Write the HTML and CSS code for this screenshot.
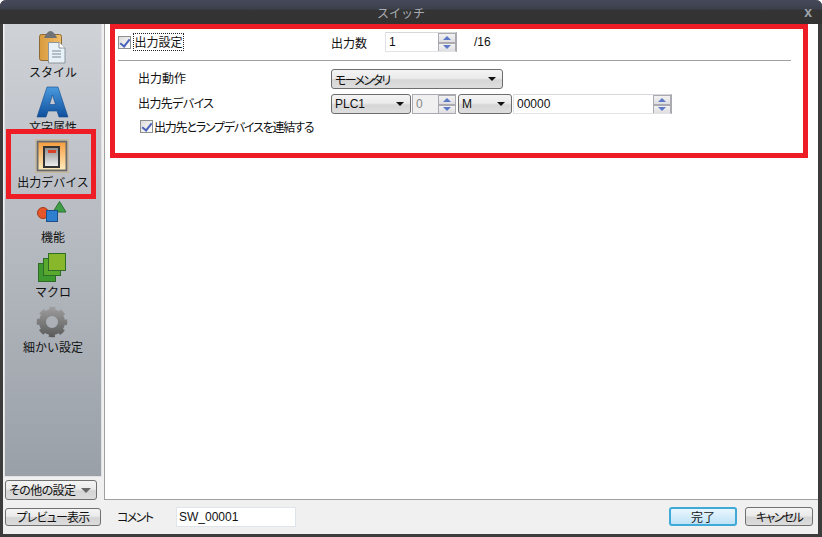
FILE: index.html
```html
<!DOCTYPE html>
<html lang="ja">
<head>
<meta charset="utf-8">
<title>スイッチ</title>
<link rel="stylesheet" href="styles.css">
</head>
<body>
<div class="window">
  <header class="titlebar">
    <span class="title">スイッチ</span>
    <span class="close">x</span>
  </header>
  <div class="content">
    <aside class="side">
      <nav class="nav">
        <div class="nav-item">
          <svg class="icon" width="36" height="36" viewBox="0 0 36 36">
            <defs><linearGradient id="cb" x1="0" y1="0" x2="1" y2="0"><stop offset="0" stop-color="#d99a3e"/><stop offset="1" stop-color="#f0bd68"/></linearGradient></defs>
            <rect x="4.500" y="7.500" width="22" height="26" rx="2" fill="url(#cb)" stroke="#8c6a35"/>
            <path d="M10 9 L12 6 Q15.500 2 19 6 L21 9 L22 11 H9 Z" fill="#6f7277"/>
            <path d="M13.500 15.500 H24 L30 21 V36 H13.500 Z" fill="#e8f1f8" stroke="#8d969e"/>
            <path d="M24 15.500 V21 H30" fill="#fff" stroke="#8d969e"/>
            <path d="M17 24 H26 M17 27 H26 M17 30 H26" stroke="#7d8a96" stroke-width="1.2"/>
          </svg>
          <span class="nav-label">スタイル</span>
        </div>
        <div class="nav-item">
          <svg class="icon" width="36" height="36" viewBox="0 0 36 36">
            <defs><linearGradient id="ag" x1="0" y1="0" x2="0" y2="1"><stop offset="0" stop-color="#4a9adf"/><stop offset="1" stop-color="#0f4f9c"/></linearGradient></defs>
            <path fill-rule="evenodd" d="M12 5 H23 L33 35 H24 L22 29 H13 L11 35 H2 Z M17.500 13 L14.500 22.500 H20.500 Z" fill="url(#ag)" stroke="#104a8e" stroke-width=".6"/>
          </svg>
          <span class="nav-label">文字属性</span>
        </div>
        <div class="nav-item">
          <svg class="icon" width="36" height="36" viewBox="0 0 36 36">
            <defs>
              <linearGradient id="og" x1="0" y1="0" x2="0" y2="1"><stop offset="0" stop-color="#f59b3c"/><stop offset="1" stop-color="#ffeec0"/></linearGradient>
              <linearGradient id="sw" x1="0" y1="0" x2="0" y2="1"><stop offset="0" stop-color="#8a8a8a"/><stop offset="1" stop-color="#f2f2f2"/></linearGradient>
            </defs>
            <rect x=".500" y="2.500" width="33" height="33" fill="#e3dccb" stroke="#c9b99c"/>
            <rect x="2.500" y="4.500" width="29" height="29" fill="url(#og)" stroke="#6a6a6a" stroke-width="2"/>
            <rect x="9" y="10" width="15" height="20" fill="url(#sw)" stroke="#333" stroke-width="2"/>
            <rect x="13" y="13" width="8" height="3" fill="#d8402a"/>
          </svg>
          <span class="nav-label">出力デバイス</span>
        </div>
        <div class="nav-item">
          <svg class="icon" width="36" height="36" viewBox="0 0 36 36">
            <path d="M24.500 9.500 L31 20 H18 Z" fill="#3f9f45" stroke="#2a6f32"/>
            <circle cx="8" cy="21" r="5.500" fill="#e5562a" stroke="#a23c1c"/>
            <rect x="11.500" y="18.500" width="11" height="11" fill="#2f7fd0" stroke="#1c4f8c"/>
          </svg>
          <span class="nav-label">機能</span>
        </div>
        <div class="nav-item">
          <svg class="icon" width="36" height="36" viewBox="0 0 36 36">
            <rect x="3.500" y="16.500" width="17" height="18" fill="#3e9a2e" stroke="#2d6d27"/>
            <rect x="8.500" y="11.500" width="17" height="17" fill="#5aa92f" stroke="#2d6d27"/>
            <rect x="13.500" y="6.500" width="17" height="17" fill="#88b72c" stroke="#2d6d27"/>
          </svg>
          <span class="nav-label">マクロ</span>
        </div>
        <div class="nav-item">
          <svg class="icon" width="36" height="36" viewBox="0 0 36 36">
            <defs><linearGradient id="gg" gradientUnits="userSpaceOnUse" x1="0" y1="5" x2="0" y2="35"><stop offset="0" stop-color="#9e9e9e"/><stop offset="1" stop-color="#5a5a5a"/></linearGradient></defs>
            <circle cx="17" cy="20" r="9.500" fill="none" stroke="url(#gg)" stroke-width="7"/>
            <circle cx="17" cy="20" r="13.500" fill="none" stroke="url(#gg)" stroke-width="3.500" stroke-dasharray="6 4.600" stroke-dashoffset="3"/>
          </svg>
          <span class="nav-label">細かい設定</span>
        </div>
      </nav>
      <button class="btn other-btn"><span class="tight">その他の設定</span><i class="arrow arrow-gray"></i></button>
    </aside>
    <main class="main">
      <div class="top-row">
        <span class="check"></span>
        <span class="focus-label">出力設定</span>
        <span class="count-label">出力数</span>
        <span class="spin count-spin"><span class="spin-value">1</span><span class="spin-btns"><b class="up"></b><b class="down"></b></span></span>
        <span class="total">/16</span>
      </div>
      <hr class="rule">
      <div class="form">
        <div class="form-row">
          <span class="form-label">出力動作</span>
          <span class="select select-wide"><span class="tight-more">モーメンタリ</span><i class="arrow"></i></span>
        </div>
        <div class="form-row">
          <span class="form-label tight">出力先デバイス</span>
          <span class="select select-plc"><span>PLC1</span><i class="arrow"></i></span>
          <span class="spin spin-off"><span class="spin-value">0</span><span class="spin-btns"><b class="up"></b><b class="down"></b></span></span>
          <span class="select select-m"><span>M</span><i class="arrow"></i></span>
          <span class="spin addr-spin"><span class="spin-value">00000</span><span class="spin-btns"><b class="up"></b><b class="down"></b></span></span>
        </div>
        <div class="link-row">
          <span class="check"></span>
          <span class="tight-link">出力先とランプデバイスを連結する</span>
        </div>
      </div>
    </main>
  </div>
  <footer class="footer">
    <button class="btn preview-btn"><span class="tight-preview">プレビュー表示</span></button>
    <span class="comment-label tight-more">コメント</span>
    <span class="comment-input">SW_00001</span>
    <span class="spacer"></span>
    <button class="btn ok-btn">完了</button>
    <button class="btn cancel-btn"><span class="tight-more">キャンセル</span></button>
  </footer>
  <div class="mark mark-side"></div>
  <div class="mark mark-main"></div>
</div>
</body>
</html>
```
FILE: styles.css
```css
* { box-sizing: border-box; }
html, body { margin: 0; padding: 0; }
body { width: 822px; height: 537px; overflow: hidden; background: #fff; font-family: "Noto Sans CJK JP", "Liberation Sans", sans-serif; font-size: 12px; color: #111; }

.tight { font-feature-settings: "palt"; letter-spacing: -.6px; }
.tight-more { font-feature-settings: "palt"; letter-spacing: -1.6px; }
.tight-link { font-feature-settings: "palt"; letter-spacing: -1.2px; }
.tight-preview { font-feature-settings: "palt"; letter-spacing: -.8px; }

.window { position: relative; width: 822px; height: 537px; display: flex; flex-direction: column; background: #f0f0f0; border-left: 3px solid #3c3c3c; border-right: 4px solid #3c3c3c; border-bottom: 3px solid #3c3c3c; border-radius: 6px 6px 0 0; }

.titlebar { flex: none; height: 24px; margin: 0 -4px 0 -3px; display: flex; align-items: center; justify-content: center; position: relative; background: linear-gradient(#45495a 0, #3d414e 9px, #343434 10px, #333 24px); border-radius: 6px 6px 0 0; }
.title { color: #a9adb5; font-size: 12px; line-height: 1; padding-top: 2px; margin-right: 20px; }
.close { position: absolute; right: 10px; top: 5px; color: #a0a4ac; font: bold 14px/14px "Liberation Sans", sans-serif; }

.content { flex: 1; display: flex; min-height: 0; }

.side { flex: none; width: 100px; padding: 0 1px 0 0; display: flex; flex-direction: column; background: #f0f0f0; }
.nav { flex: 1; padding-top: 3px; margin: 0 0 3px 1px; background: linear-gradient(#cfd2d7, #9aa0a8); border: 1px solid #dfe1e4; border-top: 0; }
.nav-item { height: 55px; display: flex; flex-direction: column; align-items: center; }
.icon { flex: none; display: block; overflow: visible; }
.nav-label { font-size: 12px; line-height: 15px; margin-top: 1px; color: #111; white-space: nowrap; }

.btn { font-family: inherit; font-size: 12px; color: #111; padding: 0; background: linear-gradient(#f4f4f4 0, #eaeaea 45%, #d4d4d4 55%, #dcdcdc 100%); border: 1px solid #707070; border-radius: 3px; line-height: 1; }
.other-btn { height: 20px; width: 92px; margin: 0 0 0 2px; display: flex; align-items: center; justify-content: space-between; padding: 0 5px 0 3px; }
.arrow { display: block; width: 0; height: 0; border-left: 4px solid transparent; border-right: 4px solid transparent; border-top: 4px solid #111; }
.arrow-gray { border-left-width: 5px; border-right-width: 5px; border-top: 5px solid #666; }

.main { flex: 1; margin-left: 1px; background: #fff; border-left: 1px solid #a0a0a0; border-bottom: 1px solid #a0a0a0; padding: 8px 27px 0 13px; }

.top-row { height: 20px; display: flex; align-items: center; }
.check { flex: none; width: 13px; height: 13px; position: relative; background: linear-gradient(135deg, #dcdcdc, #fff); border: 1px solid #8e8f8f; }
.check::after { content: ""; position: absolute; left: 3px; top: 0; width: 4px; height: 8px; border: solid #4a62b8; border-width: 0 2px 2px 0; transform: rotate(38deg); }
.focus-label { margin-left: 2px; width: 51px; border: 1px dotted #222; line-height: 16px; height: 18px; text-align: center; }
.count-label { margin-left: 147px; width: 54px; }
.spin { display: flex; height: 20px; border: 1px solid #e3e3e6; border-right: 2px solid #aaaab0; border-top: 1px solid #d6d8dc; background: #fff; }
.spin-value { flex: 1; padding-left: 3px; line-height: 18px; font-family: "Liberation Sans", sans-serif; font-size: 12px; }
.spin-btns { flex: none; width: 17px; display: flex; flex-direction: column; gap: 2px; background: #aaaab0; border-left: 1px solid #aaaab0; padding-top: 1px; }
.spin-btns b { flex: 1; display: flex; align-items: center; justify-content: center; background: linear-gradient(#f2f2f2, #dfdfe2); }
.spin-btns b::after { content: ""; width: 0; height: 0; border-left: 4px solid transparent; border-right: 4px solid transparent; }
.spin-btns .up::after { border-bottom: 4px solid #5c78c8; }
.spin-btns .down::after { border-top: 4px solid #5c78c8; }
.count-spin { width: 72px; }
.total { margin-left: 17px; font-family: "Liberation Sans", sans-serif; }

.rule { height: 1px; margin: 8px 0 0 0; border: 0; background: #a0a0a0; }

.form { padding: 8px 0 0 20px; }
.form-row { height: 20px; margin-bottom: 5px; display: flex; align-items: center; }
.form-label { flex: none; width: 193px; line-height: 16px; margin-top: -2px; }
.select { flex: none; height: 20px; display: flex; align-items: center; justify-content: space-between; padding: 0 6px 0 3px; border: 1px solid #6e6e6e; border-radius: 3px; background: linear-gradient(#f4f4f4 0, #ebebeb 45%, #d6d6d6 55%, #dedede 100%); }
.select-wide { width: 172px; }
.select-plc { width: 80px; font-family: "Liberation Sans", sans-serif; }
.select-m { width: 54px; margin-left: 2px; font-family: "Liberation Sans", sans-serif; }
.spin-off { width: 44px; margin-left: 1px; background: #f0f0f0; color: #888; border: 1px solid #aaaab0; }
.addr-spin { width: 159px; margin-left: 1px; }
.link-row { display: flex; align-items: center; gap: 1px; height: 18px; margin-left: 2px; margin-top: -2px; }

.footer { flex: none; height: 34px; display: flex; align-items: center; padding: 0 5px 1px 2px; }
.preview-btn { width: 96px; height: 18px; }
.comment-label { margin-left: 16px; width: 59px; }
.comment-input { width: 120px; height: 20px; background: #fff; border: 1px solid #dfe3ea; padding-left: 2px; line-height: 18px; font-family: "Liberation Sans", sans-serif; }
.spacer { flex: 1; }
.ok-btn { width: 68px; height: 19px; border: 2px solid #3fa9d8; background: linear-gradient(#eaf6fd, #bfe3f7); }
.cancel-btn { width: 68px; height: 19px; margin-left: 8px; }

.mark { position: absolute; border: 5px solid #ee1c25; pointer-events: none; }
.mark-side { left: 3px; top: 129px; width: 90px; height: 70px; }
.mark-main { left: 107px; top: 24px; width: 698px; height: 134px; }
```
